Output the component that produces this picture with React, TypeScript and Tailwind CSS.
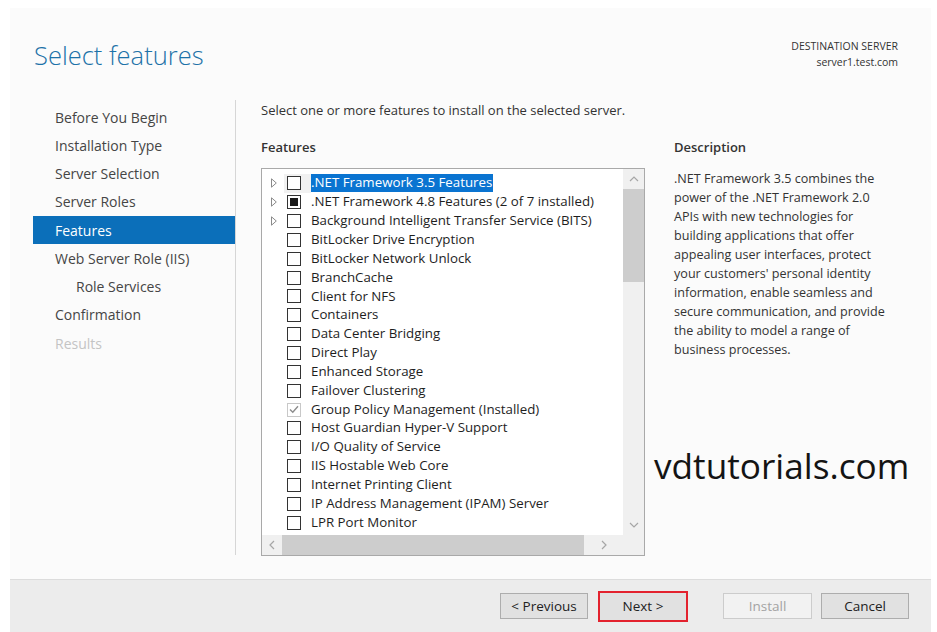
import React from "react";

const font = { fontFamily: '"Open Sans", "Noto Sans", sans-serif' };

const navItems = [
  { label: "Before You Begin" },
  { label: "Installation Type" },
  { label: "Server Selection" },
  { label: "Server Roles" },
  { label: "Features", active: true },
  { label: "Web Server Role (IIS)" },
  { label: "Role Services", indent: true },
  { label: "Confirmation" },
  { label: "Results", disabled: true },
];

type Feature = {
  label: string;
  expand?: boolean;
  state?: "none" | "partial" | "installed";
  selected?: boolean;
};

const features: Feature[] = [
  { label: ".NET Framework 3.5 Features", expand: true, selected: true },
  { label: ".NET Framework 4.8 Features (2 of 7 installed)", expand: true, state: "partial" },
  { label: "Background Intelligent Transfer Service (BITS)", expand: true },
  { label: "BitLocker Drive Encryption" },
  { label: "BitLocker Network Unlock" },
  { label: "BranchCache" },
  { label: "Client for NFS" },
  { label: "Containers" },
  { label: "Data Center Bridging" },
  { label: "Direct Play" },
  { label: "Enhanced Storage" },
  { label: "Failover Clustering" },
  { label: "Group Policy Management (Installed)", state: "installed" },
  { label: "Host Guardian Hyper-V Support" },
  { label: "I/O Quality of Service" },
  { label: "IIS Hostable Web Core" },
  { label: "Internet Printing Client" },
  { label: "IP Address Management (IPAM) Server" },
  { label: "LPR Port Monitor" },
];

function Expander() {
  return (
    <svg width="6" height="10" viewBox="0 0 6 10" className="block">
      <path d="M0.5 0.8 L5.3 5 L0.5 9.2 Z" fill="none" stroke="#8a8a8a" strokeWidth="1" />
    </svg>
  );
}

function Checkbox({ state }: { state?: Feature["state"] }) {
  if (state === "installed") {
    return (
      <div className="w-[14px] h-[14px] border border-[#c8c8c8] bg-white flex items-center justify-center">
        <svg width="10" height="9" viewBox="0 0 10 9">
          <path d="M1 4.5 L3.8 7.3 L9 1.3" fill="none" stroke="#8c8c8c" strokeWidth="1.4" />
        </svg>
      </div>
    );
  }
  return (
    <div className="w-[14px] h-[14px] border border-[#333333] bg-white flex items-center justify-center">
      {state === "partial" && <div className="w-[8px] h-[8px] bg-[#1a1a1a]" />}
    </div>
  );
}

function Chevron({ dir }: { dir: "up" | "down" | "left" | "right" }) {
  const d = {
    up: "M1 6 L5 2 L9 6",
    down: "M1 2 L5 6 L9 2",
    left: "M6 1 L2 5 L6 9",
    right: "M2 1 L6 5 L2 9",
  }[dir];
  const vert = dir === "up" || dir === "down";
  return (
    <svg width={vert ? 10 : 8} height={vert ? 8 : 10} viewBox={vert ? "0 0 10 8" : "0 0 8 10"}>
      <path d={d} fill="none" stroke="#a6a6a6" strokeWidth="1.2" />
    </svg>
  );
}

export default function App() {
  return (
    <div className="w-[937px] h-[632px] bg-white pt-[8px] pl-[10px] pr-[6px] overflow-hidden" style={font}>
      <div className="h-full bg-[#fbfbfb] flex flex-col">
        {/* Header */}
        <div className="h-[92px] flex justify-between pl-[24px] pr-[33px]">
          <h1 className="pt-[29px] text-[25.5px] leading-[36px] font-light text-[#1d72a8]">
            Select features
          </h1>
          <div className="pt-[30px] text-right text-[10.5px] leading-[16px] text-[#333]">
            <div>DESTINATION SERVER</div>
            <div>server1.test.com</div>
          </div>
        </div>

        {/* Body */}
        <div className="flex flex-1">
          {/* Nav */}
          <div className="w-[203px] ml-[23px] pt-[3px] border-r border-[#d6d6d6] h-[455px]">
            {navItems.map((n) => (
              <div
                key={n.label}
                className={
                  "h-[28.25px] flex items-center text-[14px] " +
                  (n.active ? "bg-[#0b6fba] text-white " : n.disabled ? "text-[#c4c4c4] " : "text-[#454545] ") +
                  (n.indent ? "pl-[43px]" : "pl-[22px]")
                }
              >
                {n.label}
              </div>
            ))}
          </div>

          {/* Content */}
          <div className="flex flex-1 pl-[25px]">
            <div className="w-[384px]">
              <div className="h-[22px] flex items-center text-[13px] text-[#333]">
                Select one or more features to install on the selected server.
              </div>
              <div className="h-[46px] pt-[16px] text-[13px] font-semibold text-[#333]">Features</div>
              <div className="w-[384px] h-[388px] border border-[#a9a9a9] bg-white flex flex-col">
                <div className="flex h-[366px]">
                  <div className="flex-1 h-[361px] overflow-hidden pt-[5px]">
                    {features.map((f) => (
                      <div key={f.label} className="h-[18.85px] flex items-center text-[13.3px] text-[#1e1e1e] whitespace-nowrap">
                        <div className="w-[22px] pl-[9px] flex items-center">{f.expand && <Expander />}</div>
                        <div className={"h-full flex items-center pl-[3px] pr-[10px] " + (f.selected ? "bg-[#f1f1f1]" : "")}>
                          <Checkbox state={f.state} />
                        </div>
                        <span
                          className={
                            "h-[18px] flex items-center pr-[1px] " +
                            (f.selected ? "bg-[#0a74d1] text-white" : "")
                          }
                        >
                          {f.label}
                        </span>
                      </div>
                    ))}
                  </div>
                  {/* vertical scrollbar */}
                  <div className="w-[21px] bg-[#f0f0f0] flex flex-col">
                    <div className="h-[20px] flex items-center justify-center">
                      <Chevron dir="up" />
                    </div>
                    <div className="h-[93px] bg-[#cdcdcd]" />
                    <div className="flex-1" />
                    <div className="h-[20px] flex items-center justify-center">
                      <Chevron dir="down" />
                    </div>
                  </div>
                </div>
                {/* horizontal scrollbar */}
                <div className="flex h-[20px]">
                  <div className="flex-1 bg-[#f0f0f0] flex items-center">
                    <div className="w-[20px] flex justify-center">
                      <Chevron dir="left" />
                    </div>
                    <div className="w-[302px] h-full bg-[#cdcdcd]" />
                    <div className="flex-1 flex justify-center">
                      <Chevron dir="right" />
                    </div>
                  </div>
                  <div className="w-[21px] bg-[#f0f0f0]" />
                </div>
              </div>
            </div>

            {/* Description */}
            <div className="pl-[29px] flex-1">
              <div className="h-[22px]" />
              <div className="h-[46px] pt-[16px] text-[13px] font-semibold text-[#333]">Description</div>
              <p className="mt-[1px] text-[12.6px] leading-[19px] text-[#333] whitespace-nowrap">
                .NET Framework 3.5 combines the
                <br />
                power of the .NET Framework 2.0
                <br />
                APIs with new technologies for
                <br />
                building applications that offer
                <br />
                appealing user interfaces, protect
                <br />
                your customers' personal identity
                <br />
                information, enable seamless and
                <br />
                secure communication, and provide
                <br />
                the ability to model a range of
                <br />
                business processes.
              </p>
              <div className="mt-[86px] -ml-[20px] text-[35.2px] leading-[40px] text-[#141414]">vdtutorials.com</div>
            </div>
          </div>
        </div>

        {/* Footer */}
        <div className="h-[53px] shrink-0 bg-[#ececec] border-t border-[#dcdcdc] flex items-center justify-end pr-[22px] text-[13.5px]">
          <button className="w-[88px] h-[26px] bg-[#e1e1e1] border border-[#adadad] text-[#222]">&lt; Previous</button>
          <button className="ml-[10px] w-[90px] h-[31px] bg-[#e1e1e1] border-2 border-[#e3222e] text-[#222]">Next &gt;</button>
          <button className="ml-[35px] w-[89px] h-[26px] bg-[#f2f2f2] border border-[#cccccc] text-[#a3a3a3]">Install</button>
          <button className="ml-[9px] w-[88px] h-[26px] bg-[#e1e1e1] border border-[#adadad] text-[#222]">Cancel</button>
        </div>
      </div>
    </div>
  );
}
